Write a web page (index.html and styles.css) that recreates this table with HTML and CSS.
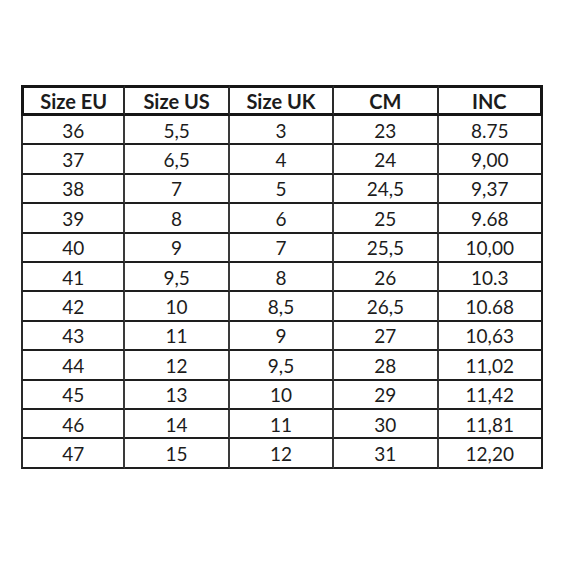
FILE: index.html
```html
<!DOCTYPE html>
<html>
<head>
<meta charset="utf-8">
<link rel="stylesheet" href="styles.css">
</head>
<body>
<table class="sizes">
  <thead>
    <tr><th>Size EU</th><th>Size US</th><th>Size UK</th><th>CM</th><th>INC</th></tr>
  </thead>
  <tbody>
    <tr><td>36</td><td>5,5</td><td>3</td><td>23</td><td>8.75</td></tr>
    <tr><td>37</td><td>6,5</td><td>4</td><td>24</td><td>9,00</td></tr>
    <tr><td>38</td><td>7</td><td>5</td><td>24,5</td><td>9,37</td></tr>
    <tr><td>39</td><td>8</td><td>6</td><td>25</td><td>9.68</td></tr>
    <tr><td>40</td><td>9</td><td>7</td><td>25,5</td><td>10,00</td></tr>
    <tr><td>41</td><td>9,5</td><td>8</td><td>26</td><td>10.3</td></tr>
    <tr><td>42</td><td>10</td><td>8,5</td><td>26,5</td><td>10.68</td></tr>
    <tr><td>43</td><td>11</td><td>9</td><td>27</td><td>10,63</td></tr>
    <tr><td>44</td><td>12</td><td>9,5</td><td>28</td><td>11,02</td></tr>
    <tr><td>45</td><td>13</td><td>10</td><td>29</td><td>11,42</td></tr>
    <tr><td>46</td><td>14</td><td>11</td><td>30</td><td>11,81</td></tr>
    <tr><td>47</td><td>15</td><td>12</td><td>31</td><td>12,20</td></tr>
  </tbody>
</table>
</body>
</html>
```
FILE: styles.css
```css
html, body {
  margin: 0;
  padding: 0;
  background: #ffffff;
}
body {
  padding: 85px 0 0 21px;
  font-family: Lato, "Open Sans", "Liberation Sans", sans-serif;
  color: #1c1c1c;
}
.sizes {
  border-collapse: separate;
  border-spacing: 0;
  table-layout: fixed;
  width: 522px;
}
.sizes th,
.sizes td {
  padding: 0;
  text-align: center;
  vertical-align: middle;
  box-sizing: border-box;
  line-height: 1;
}
.sizes th {
  height: 31px;
  font-size: 20px;
  font-weight: 700;
  border-top: 3px solid #161616;
  border-bottom: 3px solid #161616;
  border-right: 2px solid #2a2a2a;
}
.sizes th:first-child {
  border-left: 3px solid #161616;
}
.sizes th:last-child {
  border-right: 3px solid #161616;
}
.sizes td {
  height: 29.4px;
  font-size: 19px;
  font-weight: 400;
  padding-top: 1px;
  border-bottom: 2px solid #1e1e1e;
  border-right: 2px solid #3a3a3a;
}
.sizes td:first-child {
  border-left: 2px solid #2a2a2a;
}
.sizes td:last-child {
  border-right: 2px solid #1e1e1e;
}
```
